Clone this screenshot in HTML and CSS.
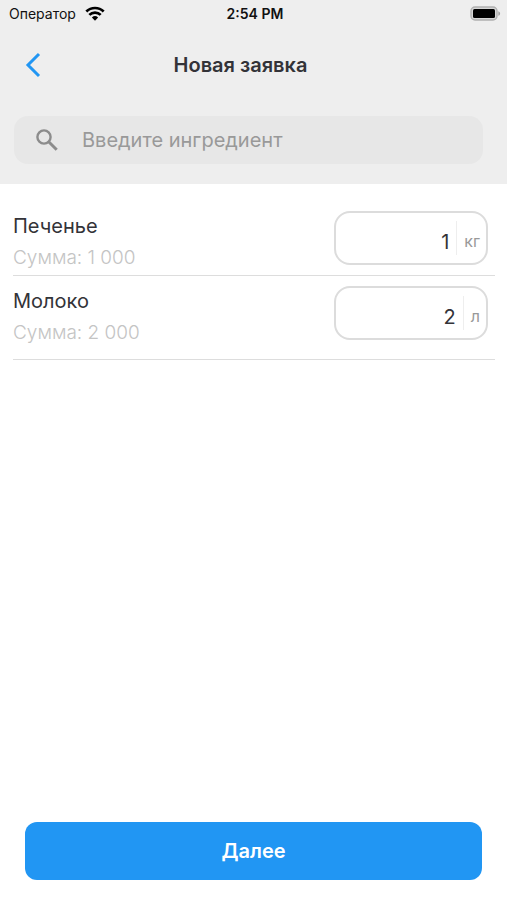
FILE: index.html
```html
<!DOCTYPE html>
<html lang="ru">
<head>
<meta charset="utf-8">
<meta name="viewport" content="width=device-width, initial-scale=1">
<title>Новая заявка</title>
<link rel="stylesheet" href="styles.css">
</head>
<body>
<div class="screen">
  <header class="header">
    <div class="status">
      <div class="carrier">
        <span>Оператор</span>
        <svg class="wifi" viewBox="0 0 18 14" aria-hidden="true">
          <path d="M.9 5.2a11.5 11.5 0 0 1 16.2 0M3.7 8.3a7.5 7.5 0 0 1 10.6 0" fill="none" stroke="#000" stroke-width="2.5"/>
          <path d="M6.1 10.8a4.2 4.2 0 0 1 5.8 0L9 13.8z" fill="#000"/>
        </svg>
      </div>
      <span class="time">2:54 PM</span>
      <svg class="battery" viewBox="0 0 31 15" aria-hidden="true">
        <rect x="1" y="1" width="26" height="13" rx="4" fill="#d6d6d6" stroke="#b0b0b0" stroke-width="1.4"/>
        <rect x="3" y="3" width="22" height="9" rx="1.5" fill="#000"/>
        <path d="M28.3 5.2c2.4.8 2.4 3.8 0 4.6z" fill="#a2a2a2"/>
      </svg>
    </div>
    <nav class="navbar">
      <a class="back" href="#" aria-label="Назад">
        <svg viewBox="0 0 16 26" aria-hidden="true"><path d="M14 2 3 13l11 11" fill="none" stroke="#2196f3" stroke-width="3"/></svg>
      </a>
      <h1 class="title">Новая заявка</h1>
    </nav>
    <label class="search">
      <svg viewBox="0 0 22 22" aria-hidden="true"><circle cx="8" cy="8" r="6.6" fill="none" stroke="#8c8c8c" stroke-width="2.4"/><path d="m12.7 12.7 8 8" stroke="#8c8c8c" stroke-width="3"/></svg>
      <input type="text" placeholder="Введите ингредиент" aria-label="Введите ингредиент">
    </label>
  </header>
  <main class="content">
    <ul class="items">
      <li class="item">
        <div class="info">
          <label class="name" for="cookies">Печенье</label>
          <span class="sum">Сумма: 1 000</span>
        </div>
        <div class="amount">
          <input id="cookies" type="text" inputmode="decimal" value="1">
          <span class="unit">кг</span>
        </div>
      </li>
      <li class="item">
        <div class="info">
          <label class="name" for="milk">Молоко</label>
          <span class="sum">Сумма: 2 000</span>
        </div>
        <div class="amount">
          <input id="milk" type="text" inputmode="decimal" value="2">
          <span class="unit">л</span>
        </div>
      </li>
    </ul>
  </main>
  <footer class="footer">
    <button class="next" type="button">Далее</button>
  </footer>
</div>
</body>
</html>
```
FILE: styles.css
```css
* {
  box-sizing: border-box;
}

body {
  margin: 0;
  background: #fff;
  color: #333338;
  font-family: Inter, "Liberation Sans", sans-serif;
  font-size: 20px;
}

.screen {
  display: flex;
  flex-direction: column;
  min-height: 100vh;
}

.header {
  padding-bottom: 20px;
  background: #eee;
}

.status {
  display: grid;
  grid-template-columns: 1fr auto 1fr;
  align-items: center;
  height: 26px;
  padding: 0 6px 0 9px;
  color: #111;
  font-size: 14px;
}

.carrier {
  display: flex;
  align-items: center;
  gap: 9px;
}

.wifi {
  width: 20px;
  height: 15px;
}

.time {
  font-weight: 600;
}

.battery {
  justify-self: end;
  width: 31px;
  height: 15px;
}

.navbar {
  display: grid;
  grid-template-columns: 48px 1fr 74px;
  align-items: center;
  height: 78px;
  padding: 0 13px;
}

.back {
  display: flex;
  padding: 8px 12px;
}

.back svg {
  width: 16px;
  height: 26px;
}

.title {
  margin: 0;
  font-size: 20px;
  font-weight: 600;
  text-align: center;
}

.search {
  display: flex;
  align-items: center;
  gap: 24px;
  height: 48px;
  margin: 12px 24px 0 14px;
  padding: 0 22px;
  border-radius: 14px;
  background: #e7e7e7;
}

.search svg {
  flex: none;
  width: 22px;
  height: 22px;
}

input {
  min-width: 0;
  padding: 0;
  border: 0;
  outline: 0;
  background: none;
  color: inherit;
  font: inherit;
}

.search input {
  flex: 1;
}

.search input::placeholder {
  color: #999;
  opacity: 1;
}

.content {
  flex: 1;
  padding: 17px 12px 0 13px;
}

.items {
  margin: 0;
  padding: 0;
  list-style: none;
}

.item {
  display: flex;
  align-items: flex-start;
  justify-content: space-between;
  padding: 10px 7px 0 0;
  border-bottom: 1px solid #ddd;
}

.item:last-child {
  padding-bottom: 9px;
}

.info {
  display: flex;
  flex-direction: column;
}

.name {
  line-height: 30px;
}

.sum {
  color: #c4c4c4;
  font-size: 19px;
  font-weight: 300;
  line-height: 34px;
}

.amount {
  display: flex;
  align-items: center;
  width: 154px;
  height: 54px;
  padding: 0 6px;
  border: 2px solid #dcdcdc;
  border-radius: 16px;
}

.amount input {
  flex: 1;
  height: 50px;
  padding: 8px 7px 0 0;
  text-align: right;
}

.unit {
  padding: 6px 0 0 7px;
  border-left: 1px solid #eee;
  color: #999;
  font-size: 16px;
  line-height: 28px;
}

.footer {
  padding: 0 25px 20px;
}

.next {
  display: block;
  width: 100%;
  height: 58px;
  border: 0;
  border-radius: 12px;
  background: #2196f3;
  color: #fff;
  font: inherit;
  font-weight: 600;
}
```
